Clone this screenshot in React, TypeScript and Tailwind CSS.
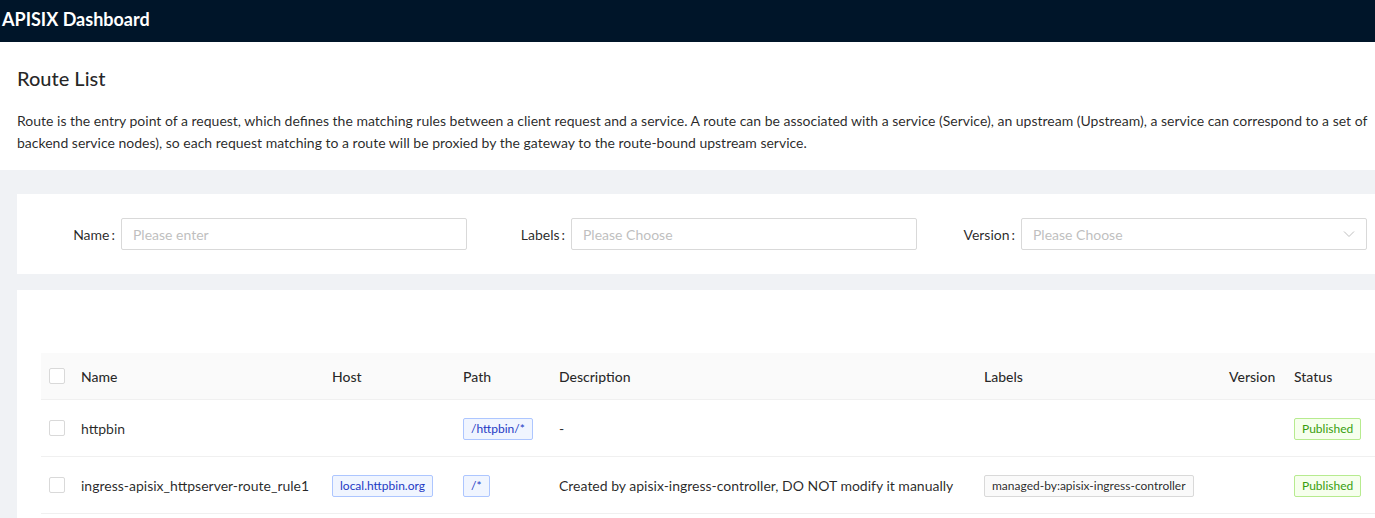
import React from "react";

const font = { fontFamily: '"Lato", "Noto Sans", sans-serif' };

function Checkbox() {
  return <span className="inline-block w-4 h-4 border border-[#d9d9d9] rounded-[2px] bg-white" />;
}

function Tag({ children, kind }: { children: React.ReactNode; kind: "blue" | "gray" | "green" }) {
  const cls =
    kind === "blue"
      ? "text-[#1d39c4] bg-[#f0f5ff] border-[#adc6ff]"
      : kind === "green"
      ? "text-[#389e0d] bg-[#f6ffed] border-[#b7eb8f]"
      : "text-[rgba(0,0,0,0.85)] bg-[#fafafa] border-[#d9d9d9]";
  return (
    <span className={`inline-block h-[22px] leading-[20px] px-[7px] text-[12px] border rounded-[2px] whitespace-nowrap ${cls}`}>
      {children}
    </span>
  );
}

function Field({ label, placeholder, select }: { label: string; placeholder: string; select?: boolean }) {
  return (
    <div className="flex items-center w-[426px]">
      <div className="w-[80px] pr-[6px] text-right text-[14px] text-[rgba(0,0,0,0.85)] whitespace-nowrap">
        {label}
        <span className="ml-[2px]">:</span>
      </div>
      <div className="w-[346px] h-[32px] border border-[#d9d9d9] rounded-[2px] bg-white flex items-center px-[11px] justify-between">
        <span className="text-[14px] text-[#bfbfbf]">{placeholder}</span>
        {select && (
          <svg width="12" height="12" viewBox="0 0 12 12" className="text-[#bfbfbf]">
            <path d="M1 3.5 L6 8.5 L11 3.5" fill="none" stroke="currentColor" strokeWidth="1" />
          </svg>
        )}
      </div>
    </div>
  );
}

export default function App() {
  const cols = "grid grid-cols-[24px_251px_131px_96px_425px_245px_65px_120px]";
  return (
    <div className="w-[1375px] h-[518px] overflow-hidden bg-[#f0f2f5]" style={font}>
      <div className="w-[1420px]">
        <div className="h-[42px] bg-[#001529] flex items-center pl-[2px] pb-[4px]">
          <span className="text-white text-[18px] font-bold">APISIX Dashboard</span>
        </div>
        <div className="bg-white pl-[17px] pt-[16px] pb-[16px]">
          <h1 className="text-[20px] font-medium text-[rgba(0,0,0,0.85)] leading-[32px] mt-[4px]">Route List</h1>
          <p className="text-[14px] leading-[22px] text-[rgba(0,0,0,0.85)] mt-[16px] w-[1400px]">
            Route is the entry point of a request, which defines the matching rules between a client request and a service. A route can be associated with a service (Service), an upstream (Upstream), a service can correspond to a set of backend service nodes), so each request matching to a route will be proxied by the gateway to the route-bound upstream service.
          </p>
        </div>
        <div className="pl-[17px] pt-[24px]">
          <div className="bg-white p-[24px] flex gap-[24px]">
            <Field label="Name" placeholder="Please enter" />
            <Field label="Labels" placeholder="Please Choose" />
            <Field label="Version" placeholder="Please Choose" select />
          </div>
          <div className="bg-white mt-[16px] pl-[24px] pt-[63px] pb-[24px]">
            <div className={`${cols} h-[47px] items-center bg-[#fafafa] border-b border-[#f0f0f0] text-[14px] font-medium text-[rgba(0,0,0,0.85)]`}>
              <div className="pl-[8px] flex"><Checkbox /></div>
              <div className="pl-[16px]">Name</div>
              <div className="pl-[16px]">Host</div>
              <div className="pl-[16px]">Path</div>
              <div className="pl-[16px]">Description</div>
              <div className="pl-[16px]">Labels</div>
              <div className="pl-[16px]">Version</div>
              <div className="pl-[16px]">Status</div>
            </div>
            <div className={`${cols} h-[57px] items-center border-b border-[#f0f0f0] text-[14px] text-[rgba(0,0,0,0.85)]`}>
              <div className="pl-[8px] flex"><Checkbox /></div>
              <div className="pl-[16px]">httpbin</div>
              <div className="pl-[16px]"></div>
              <div className="pl-[16px]"><Tag kind="blue">/httpbin/*</Tag></div>
              <div className="pl-[16px]">-</div>
              <div className="pl-[16px]"></div>
              <div className="pl-[16px]"></div>
              <div className="pl-[16px]"><Tag kind="green">Published</Tag></div>
            </div>
            <div className={`${cols} h-[57px] items-center border-b border-[#f0f0f0] text-[14px] text-[rgba(0,0,0,0.85)]`}>
              <div className="pl-[8px] flex"><Checkbox /></div>
              <div className="pl-[16px] whitespace-nowrap">ingress-apisix_httpserver-route_rule1</div>
              <div className="pl-[16px]"><Tag kind="blue">local.httpbin.org</Tag></div>
              <div className="pl-[16px]"><Tag kind="blue">/*</Tag></div>
              <div className="pl-[16px] whitespace-nowrap">Created by apisix-ingress-controller, DO NOT modify it manually</div>
              <div className="pl-[16px]"><Tag kind="gray">managed-by:apisix-ingress-controller</Tag></div>
              <div className="pl-[16px]"></div>
              <div className="pl-[16px]"><Tag kind="green">Published</Tag></div>
            </div>
          </div>
        </div>
      </div>
    </div>
  );
}
